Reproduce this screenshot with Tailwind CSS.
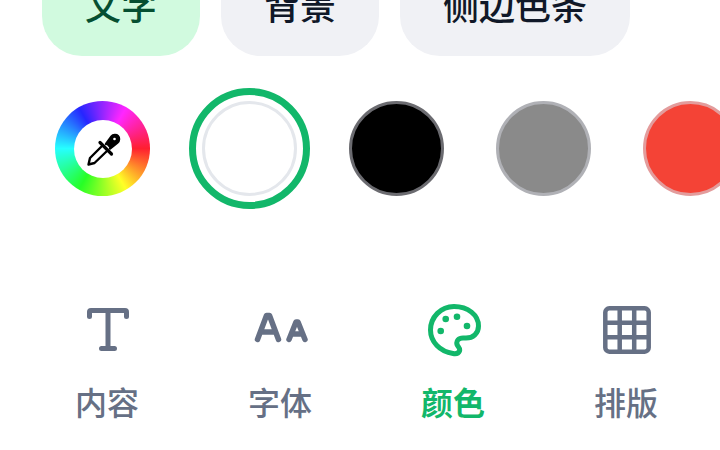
<!DOCTYPE html>
<html lang="zh">

<head>
  <meta charset="UTF-8">
  <meta name="viewport" content="width=device-width, initial-scale=1.0">
  <title>颜色</title>
  <script src="https://cdn.jsdelivr.net/npm/@tailwindcss/browser@4"></script>
</head>

<body class="w-[720px] h-[450px] overflow-hidden bg-white font-['Inter','Noto_Sans_CJK_SC',sans-serif]">
  <!-- tabs, cut off by the top of the window -->
  <div class="flex gap-[21px] pl-[42px] -mt-[44px] text-[36px] font-medium">
    <button class="h-[100px] pt-[2px] px-[43px] rounded-[40px] bg-[#d1fadf] text-[#054f31] whitespace-nowrap">文字</button>
    <button class="h-[100px] pt-[2px] px-[43px] rounded-[40px] bg-[#f0f1f5] text-[#101828] whitespace-nowrap">背景</button>
    <button class="h-[100px] pt-[2px] px-[43px] rounded-[40px] bg-[#f0f1f5] text-[#101828] whitespace-nowrap">侧边色条</button>
  </div>

  <!-- swatches -->
  <div class="flex gap-[52px] pl-[55px] mt-[45px] w-[800px]">
    <div class="w-[95px] h-[95px] shrink-0 rounded-full flex items-center justify-center bg-[conic-gradient(from_90deg,#ff1f2f,#ffff26,#26ff26,#26ffff,#2626ff,#ff26ff,#ff1f2f)]">
      <div class="w-[58px] h-[58px] rounded-full bg-white flex items-center justify-center">
        <svg width="36" height="36" viewBox="0 0 36 36" fill="none" stroke="#000" stroke-width="2.400" stroke-linejoin="round" stroke-linecap="round">
          <path d="M17.500 14.500 L5 27 L3.500 33.500 L9.500 32 L22.500 19.500" fill="#fff" />
          <path d="M15 11.500 L26.500 23" stroke-width="3.200" />
          <path d="M21 13 L26.500 5.500 C28 3.500 31.500 3.500 33 5 C34.500 6.500 34.500 10 32.500 11.500 L25 17.500" fill="#000" />
          <circle cx="29.500" cy="8" r="1.300" fill="#fff" stroke="none" />
        </svg>
      </div>
    </div>
    <div class="relative w-[95px] h-[95px] shrink-0 rounded-full bg-white border-[3px] border-[#e4e7ec]">
      <span class="absolute -inset-[16px] rounded-full border-[7px] border-[#12b76a]"></span>
    </div>
    <div class="w-[95px] h-[95px] shrink-0 rounded-full bg-black border-[3px] border-[#6b6b70]"></div>
    <div class="w-[95px] h-[95px] shrink-0 rounded-full bg-[#8a8a8a] border-[3px] border-[#b0b1b6]"></div>
    <div class="w-[95px] h-[95px] shrink-0 rounded-full bg-[#f44336] border-[3px] border-[#e39c9c]"></div>
  </div>

  <!-- bottom nav -->
  <nav class="grid grid-cols-[repeat(4,173px)] pl-[20.5px] mt-[105px] text-[32px] font-medium text-[#667085]">
    <div class="flex flex-col items-center gap-[24px]">
      <svg width="56" height="56" viewBox="0 0 56 56" fill="none" stroke="#667085" stroke-width="5" stroke-linecap="round" stroke-linejoin="round">
        <path d="M10.500 15.500 V11 Q10.500 9.500 12 9.500 H46 Q47.500 9.500 47.500 11 V15.500 M29 9.500 V47.500 M22.500 47.500 H35.500" />
      </svg>
      <span class="leading-[46px]">内容</span>
    </div>
    <div class="flex flex-col items-center gap-[24px]">
      <svg width="56" height="56" viewBox="0 0 56 56" fill="none" stroke="#667085" stroke-width="5.500" stroke-linecap="round" stroke-linejoin="round">
        <path d="M5.500 38.500 L14.500 14.500 H17.500 L26.500 38.500 M9 31 H23 M37 38.500 L44 21 H46 L53 38.500 M40 33 H50" />
      </svg>
      <span class="leading-[46px]">字体</span>
    </div>
    <div class="flex flex-col items-center gap-[24px] text-[#12b76a] font-semibold">
      <svg width="56" height="56" viewBox="0 0 56 56" fill="none" stroke="#12b76a" stroke-width="5" stroke-linecap="round" stroke-linejoin="round">
        <path d="M29 5.500 C43 5.500 53.500 14 53.500 25 C53.500 32.500 48 37 41 37 H38 C33.500 37 31 40 32 43.500 C33 46 35.500 47 34.500 50 C33.500 52.500 31 53 28 52.500 C15 50.500 5.500 41 5.500 29 C5.500 16 16 5.500 29 5.500 Z" />
        <circle cx="15.700" cy="30" r="3.300" fill="#12b76a" stroke="none" />
        <circle cx="20.700" cy="18" r="3.300" fill="#12b76a" stroke="none" />
        <circle cx="32" cy="15.700" r="3.300" fill="#12b76a" stroke="none" />
        <circle cx="42" cy="25" r="3.300" fill="#12b76a" stroke="none" />
      </svg>
      <span class="leading-[46px]">颜色</span>
    </div>
    <div class="flex flex-col items-center gap-[24px]">
      <svg width="56" height="56" viewBox="0 0 56 56" fill="none" stroke="#667085" stroke-width="4.500" stroke-linejoin="round">
        <rect x="7.300" y="7.300" width="43.400" height="43.400" rx="4" />
        <path d="M21.700 7.300 V50.700 M36.200 7.300 V50.700 M7.300 21.700 H50.700 M7.300 36.200 H50.700" />
      </svg>
      <span class="leading-[46px]">排版</span>
    </div>
  </nav>
</body>
</html>
